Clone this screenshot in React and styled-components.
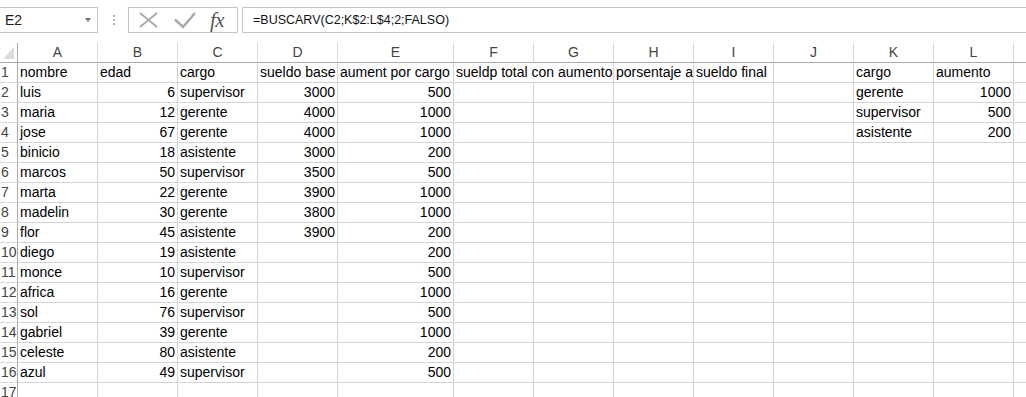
import styled, { createGlobalStyle } from 'styled-components';

const GlobalStyle = createGlobalStyle`
  html, body {
    margin: 0;
    background: #fff;
    overflow: hidden;
  }
  body {
    font-family: "Liberation Sans", Arial, sans-serif;
  }
`;

const Window = styled.div`
  width: 1026px;
  height: 397px;
  overflow: hidden;
  display: flex;
  flex-direction: column;
  background: #fff;
`;

const FormulaBar = styled.div`
  height: 43px;
  flex: none;
  box-sizing: border-box;
  padding-top: 7px;
  display: flex;
  align-items: flex-start;
`;

const NameBox = styled.div`
  width: 98px;
  height: 26px;
  box-sizing: border-box;
  border: 1px solid #c6c6c6;
  border-left: none;
  padding: 0 6px 0 5px;
  display: flex;
  align-items: center;
  justify-content: space-between;
  font-size: 14px;
  color: #222;
`;

const DropArrow = styled.span`
  width: 0;
  height: 0;
  border-left: 3.5px solid transparent;
  border-right: 3.5px solid transparent;
  border-top: 4px solid #777;
`;

const Grip = styled.div`
  width: 2px;
  height: 26px;
  margin: 0 13px 0 15px;
  display: flex;
  flex-direction: column;
  justify-content: center;
  gap: 2px;

  span {
    width: 2px;
    height: 2px;
    background: #b5b5b5;
  }
`;

const FnButtons = styled.div`
  width: 110px;
  height: 26px;
  box-sizing: border-box;
  border: 1px solid #c6c6c6;
  padding-left: 10px;
  display: flex;
  align-items: center;
`;

const FxLabel = styled.span`
  margin-left: 14px;
  font-family: "Liberation Serif", "Times New Roman", serif;
  font-style: italic;
  font-size: 21px;
  line-height: 24px;
  color: #555;
  letter-spacing: -0.5px;
`;

const FormulaInput = styled.div`
  flex: 1;
  margin-left: 4px;
  height: 26px;
  box-sizing: border-box;
  border: 1px solid #c6c6c6;
  border-right: none;
  padding-left: 10px;
  font-size: 12.5px;
  line-height: 24px;
  color: #111;
  white-space: nowrap;
`;

const Sheet = styled.div`
  display: grid;
  grid-template-columns: 18px 80px 80px 80px 80px 116px repeat(8, 80px);
  grid-auto-rows: 20px;
  font-size: 14px;
`;

const Corner = styled.div`
  box-sizing: border-box;
  border-right: 1px solid #ababab;
  border-bottom: 1px solid #ababab;
  display: flex;
  align-items: flex-end;
  justify-content: flex-end;
  padding: 0 3px 3px 0;
`;

const ColHeader = styled.div`
  box-sizing: border-box;
  border-right: 1px solid #dadada;
  border-bottom: 1px solid #ababab;
  color: #444;
  text-align: center;
  line-height: 19px;
`;

const RowHeader = styled.div`
  box-sizing: border-box;
  border-right: 1px solid #ababab;
  border-bottom: 1px solid #dadada;
  color: #444;
  padding-left: 1px;
  line-height: 19px;
  white-space: nowrap;
  overflow: hidden;
`;

const Cell = styled.div`
  box-sizing: border-box;
  grid-column: span ${(p) => p.$span || 1};
  border-right: 1px solid #d4d4d4;
  border-bottom: 1px solid #d4d4d4;
  padding: 0 2px 0 2px;
  line-height: 19px;
  color: #000;
  text-align: ${(p) => (p.$num ? 'right' : 'left')};
  white-space: nowrap;
  overflow: hidden;
`;

// M is only a sliver at the right edge, its letter falls outside the window
const COLS = ['A', 'B', 'C', 'D', 'E', 'F', 'G', 'H', 'I', 'J', 'K', 'L', ''];

const header = [
  'nombre', 'edad', 'cargo', 'sueldo base', 'aument por cargo',
  { text: 'sueldp total con aumento', span: 2 },
  'porsentaje a', 'sueldo final', '', 'cargo', 'aumento', '',
];

const people = [
  ['luis', 6, 'supervisor', 3000, 500],
  ['maria', 12, 'gerente', 4000, 1000],
  ['jose', 67, 'gerente', 4000, 1000],
  ['binicio', 18, 'asistente', 3000, 200],
  ['marcos', 50, 'supervisor', 3500, 500],
  ['marta', 22, 'gerente', 3900, 1000],
  ['madelin', 30, 'gerente', 3800, 1000],
  ['flor', 45, 'asistente', 3900, 200],
  ['diego', 19, 'asistente', '', 200],
  ['monce', 10, 'supervisor', '', 500],
  ['africa', 16, 'gerente', '', 1000],
  ['sol', 76, 'supervisor', '', 500],
  ['gabriel', 39, 'gerente', '', 1000],
  ['celeste', 80, 'asistente', '', 200],
  ['azul', 49, 'supervisor', '', 500],
];

const lookup = [
  ['gerente', 1000],
  ['supervisor', 500],
  ['asistente', 200],
];

const rows = [
  header,
  ...people.map((p, i) => [
    ...p, '', '', '', '', '',
    ...(lookup[i] || ['', '']),
    '',
  ]),
  Array(13).fill(''),
];

const CloseIcon = () => (
  <svg width="19" height="16" viewBox="0 0 19 16">
    <path d="M1 1 L18 15 M18 1 L1 15" stroke="#a8a8a8" strokeWidth="1.8" fill="none" />
  </svg>
);

const CheckIcon = () => (
  <svg width="22" height="18" viewBox="0 0 22 18" style={{ marginLeft: 16 }}>
    <path d="M1 8.5 L9 16 L21 2" stroke="#a8a8a8" strokeWidth="2.4" fill="none" />
  </svg>
);

const CornerMark = () => (
  <svg width="11" height="12" viewBox="0 0 11 12">
    <polygon points="11,0 11,12 0,12" fill="#dcdcdc" />
  </svg>
);

export default function App() {
  return (
    <Window>
      <GlobalStyle />
      <FormulaBar>
        <NameBox>
          E2
          <DropArrow />
        </NameBox>
        <Grip>
          <span />
          <span />
          <span />
        </Grip>
        <FnButtons>
          <CloseIcon />
          <CheckIcon />
          <FxLabel>fx</FxLabel>
        </FnButtons>
        <FormulaInput>=BUSCARV(C2;K$2:L$4;2;FALSO)</FormulaInput>
      </FormulaBar>
      <Sheet>
        <Corner>
          <CornerMark />
        </Corner>
        {COLS.map((c, i) => (
          <ColHeader key={i}>{c}</ColHeader>
        ))}
        {rows.map((row, r) => [
          <RowHeader key={`h${r}`}>{r + 1}</RowHeader>,
          ...row.map((v, c) => {
            const cell = typeof v === 'object' && v !== null ? v : { text: v };
            return (
              <Cell key={`${r}-${c}`} $span={cell.span} $num={typeof cell.text === 'number'}>
                {cell.text}
              </Cell>
            );
          }),
        ])}
      </Sheet>
    </Window>
  );
}
